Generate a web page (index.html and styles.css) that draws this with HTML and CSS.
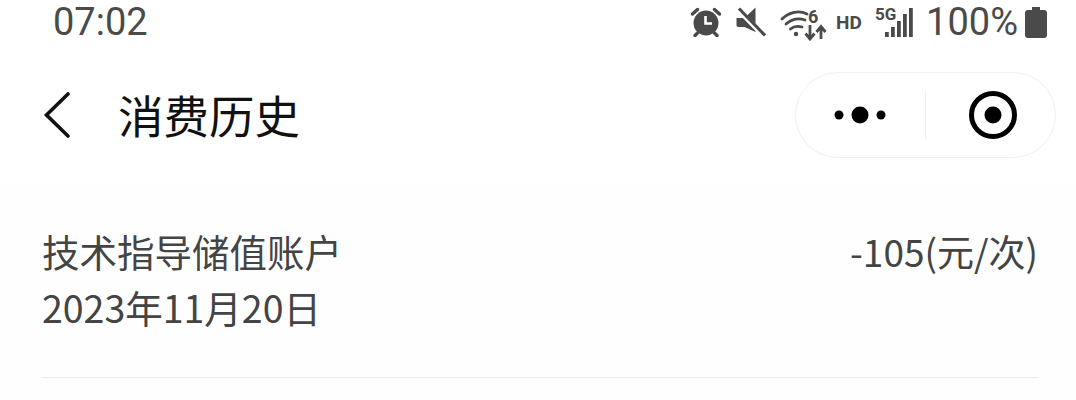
FILE: index.html
```html
<!DOCTYPE html>
<html lang="zh-CN">
<head>
    <meta charset="UTF-8">
    <meta name="viewport" content="width=device-width, initial-scale=1.0">
    <title>消费历史</title>
    <link rel="stylesheet" href="styles.css">
</head>
<body>
    <div class="status-bar">
        <span class="time">07:02</span>
        <div class="status-icons">
            <svg class="icon-alarm" width="30" height="30" viewBox="0 0 30 30">
                <circle cx="15" cy="16" r="12.500" fill="#4a4a4a"/>
                <path d="M14.500 9V16.500H21" fill="none" stroke="#fff" stroke-width="2.600"/>
                <path d="M1.500 7 6.500 2.500M28.500 7 23.500 2.500M6.500 26 4 28.500M23.500 26 26 28.500" fill="none" stroke="#4a4a4a" stroke-width="3.400" stroke-linecap="round"/>
            </svg>
            <svg class="icon-mute" width="30" height="30" viewBox="0 0 30 30">
                <path d="M0.500 11H8.500L19.500 0.500V25L8.500 20H2.500C1 20 0.500 19 0.500 18Z" fill="#4a4a4a"/>
                <path d="M3 3.500 29 30" fill="none" stroke="#fff" stroke-width="5"/>
                <path d="M3 1.500 29 28.500" fill="none" stroke="#4a4a4a" stroke-width="3.200"/>
            </svg>
            <svg class="icon-wifi" width="46" height="32" viewBox="0 0 46 32">
                <path d="M1 10C8 3 18 1 26 5M5 15C11 10 18 9 24 11M9.500 20C13 17 17 17 21 18" fill="none" stroke="#4a4a4a" stroke-width="2.800" stroke-linecap="round"/>
                <circle cx="15" cy="25" r="2.200" fill="#4a4a4a"/>
                <text x="27" y="14" class="wifi-six">6</text>
                <path d="M29 16V29M24.500 24.500 29 30 33.500 24.500M40 30V18M35.500 23 40 17.500 44.500 23" fill="none" stroke="#4a4a4a" stroke-width="2.800"/>
            </svg>
            <span class="hd">HD</span>
            <div class="signal">
                <span class="five-g">5G</span>
                <svg class="signal-bars" width="38" height="30" viewBox="0 0 38 30">
                    <rect x="10" y="25" width="3.800" height="5" fill="#4a4a4a"/>
                    <rect x="16" y="20" width="3.800" height="10" fill="#4a4a4a"/>
                    <rect x="22" y="14" width="3.800" height="16" fill="#4a4a4a"/>
                    <rect x="28" y="7" width="3.800" height="23" fill="#4a4a4a"/>
                    <rect x="34" y="1" width="3.800" height="29" fill="#4a4a4a"/>
                </svg>
            </div>
            <span class="battery-text">100%</span>
            <svg class="icon-battery" width="22" height="31" viewBox="0 0 22 31">
                <path d="M7 0H15V3H19C21 3 22 4 22 6V28C22 30 21 31 19 31H3C1 31 0 30 0 28V6C0 4 1 3 3 3H7Z" fill="#4a4a4a"/>
            </svg>
        </div>
    </div>

    <div class="nav-bar">
        <div class="nav-left">
            <svg class="back" width="30" height="48" viewBox="0 0 30 48">
                <path d="M25 4 3.500 25 25 46" fill="none" stroke="#111" stroke-width="3.600" stroke-linecap="round" stroke-linejoin="miter"/>
            </svg>
            <span class="nav-title">消费历史</span>
        </div>
        <div class="capsule">
            <div class="capsule-part">
                <svg class="capsule-more" width="60" height="20" viewBox="0 0 60 20">
                    <circle cx="9" cy="10" r="4.500"/>
                    <circle cx="30" cy="10" r="8.500"/>
                    <circle cx="51" cy="10" r="4.500"/>
                </svg>
            </div>
            <div class="capsule-line"></div>
            <div class="capsule-part">
                <svg class="capsule-close" width="50" height="50" viewBox="0 0 50 50">
                    <circle cx="25" cy="25" r="21.500" fill="none" stroke="#000" stroke-width="5"/>
                    <circle cx="25" cy="25" r="8.500"/>
                </svg>
            </div>
        </div>
    </div>

    <div class="list">
        <div class="record">
            <div class="record-info">
                <div>技术指导储值账户</div>
                <div>2023年11月20日</div>
            </div>
            <div class="record-amount">-105(元/次)</div>
        </div>
    </div>
</body>
</html>
```

FILE: styles.css
```css
body {
    margin: 0;
    background: #fefefe;
    font-family: "Noto Sans CJK SC", "Noto Sans", sans-serif;
    overflow: hidden;
}
.status-bar {
    height: 44px;
    display: flex;
    justify-content: space-between;
    align-items: center;
    padding: 0 29px 0 53px;
    background: #fff;
    color: #4a4a4a;
    font-family: Roboto, sans-serif;
}
.time {
    font-size: 38px;
}
.status-icons {
    display: flex;
    align-items: center;
}
.icon-alarm {
    margin-right: 15px;
}
.icon-mute {
    margin-right: 15px;
}
.icon-wifi {
    margin-top: 5px;
    margin-right: 9px;
    overflow: visible;
}
.wifi-six {
    font-size: 18px;
    font-weight: 700;
    fill: #4a4a4a;
}
.hd {
    font-size: 19px;
    font-weight: 700;
    width: 26px;
    margin-right: 13px;
}
.signal {
    position: relative;
    width: 38px;
    height: 30px;
    margin-right: 13px;
}
.signal-bars {
    display: block;
}
.five-g {
    position: absolute;
    left: 0;
    top: -3px;
    font-size: 17px;
    font-weight: 700;
}
.battery-text {
    font-size: 38px;
    margin-right: 7px;
}
.nav-bar {
    height: 138px;
    display: flex;
    justify-content: space-between;
    align-items: center;
    padding: 0 20px 0 43px;
    background: #fff;
}
.nav-left {
    display: flex;
    align-items: center;
    margin-top: 2px;
}
.back {
    margin-right: 45px;
}
.nav-title {
    font-size: 45.5px;
    color: #111;
}
.capsule {
    width: 259px;
    height: 84px;
    display: flex;
    align-items: center;
    border: 1px solid #f0f0f0;
    border-radius: 43px;
    margin-top: 4px;
}
.capsule-part {
    flex: 1;
    display: flex;
    justify-content: center;
    align-items: center;
}
.capsule-more {
    margin-right: 2px;
}
.capsule-close {
    margin-left: 4px;
}
.capsule-line {
    width: 1px;
    height: 50px;
    background: #f0f0f0;
}
.list {
    padding: 0 38px 0 42px;
}
.record {
    display: flex;
    justify-content: space-between;
    padding: 41px 0 42px 0;
    border-bottom: 1px solid #eeeeee;
    font-size: 37.5px;
    line-height: 56px;
    color: #444;
}
.record-amount {
    font-size: 37px;
}
```
